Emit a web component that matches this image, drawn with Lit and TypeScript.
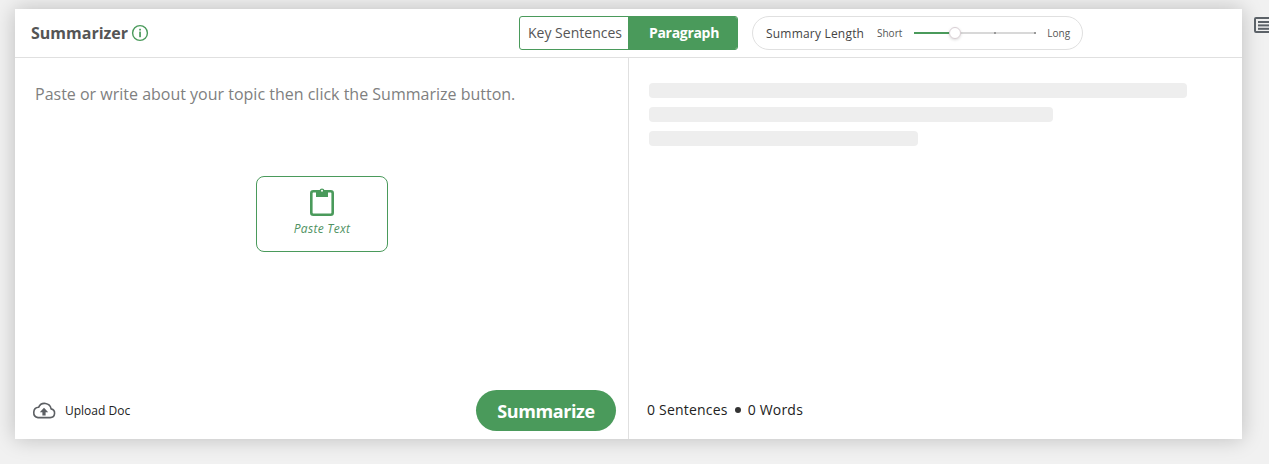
import { LitElement, html, css } from "lit";
import { customElement } from "lit/decorators.js";

@customElement("app-root")
export class AppRoot extends LitElement {
  static styles = css`
    :host {
      display: flex;
      align-items: flex-start;
      width: 1269px;
      height: 464px;
      overflow: hidden;
      background: #f1f1f1;
      font-family: "Open Sans", sans-serif;
      color: #333;
      box-sizing: border-box;
      padding: 9px 0 0 15px;
    }
    .card {
      flex: none;
      width: 1227px;
      height: 430px;
      background: #fff;
      box-shadow: 0 0 20px rgba(0, 0, 0, 0.22);
      display: flex;
      flex-direction: column;
    }
    .side {
      flex: none;
      margin: 8px 0 0 12px;
      width: 30px;
      height: 16px;
      display: block;
    }
    .head {
      flex: none;
      height: 48px;
      border-bottom: 1px solid #e0e0e0;
      display: flex;
      align-items: center;
      position: relative;
    }
    .title {
      display: flex;
      align-items: center;
      gap: 3px;
      margin-left: 16px;
      width: 488px;
      font-weight: 700;
      font-size: 16px;
      color: #555;
    }
    .title svg { display: block; }
    .toggle {
      display: flex;
      width: 219px;
      height: 34px;
      box-sizing: border-box;
      border: 1px solid #4a9a5b;
      border-radius: 3px;
      overflow: hidden;
      font-size: 14px;
      line-height: 30px;
    }
    .toggle span { display: flex; align-items: center; justify-content: center; padding-bottom: 1px; }
    .key { width: 108px; color: #555; padding-left: 2px; box-sizing: border-box; letter-spacing: 0.02px; }
    .para { flex: 1; background: #4a9a5b; color: #fff; font-weight: 700; padding-left: 3px; letter-spacing: -0.3px; }
    .length {
      margin-left: 14px;
      width: 331px;
      height: 34px;
      box-sizing: border-box;
      border: 1px solid #e0e0e0;
      border-radius: 17px;
      display: flex;
      align-items: center;
      padding-left: 13px;
      font-size: 12px;
      color: #444;
    }
    .length .lbl { width: 111px; letter-spacing: 0.2px; }
    .small { font-size: 10px; color: #555; }
    .track {
      position: relative;
      width: 122px;
      height: 2px;
      margin: 0 11px 0 12px;
      background: #d8d8d8;
    }
    .fill { width: 35px; height: 2px; background: #4a9a5b; }
    .knob {
      position: absolute;
      left: 35px;
      top: -5px;
      width: 12px;
      height: 12px;
      box-sizing: border-box;
      border-radius: 50%;
      background: #fff;
      border: 1px solid #d9cfd4;
      box-shadow: 0 1px 3px rgba(0,0,0,0.15);
    }
    .tick {
      position: absolute;
      top: 0;
      width: 2px;
      height: 2px;
      background: #999;
    }
    .body { flex: 1; display: flex; min-height: 0; }
    .left {
      width: 613px;
      border-right: 1px solid #e0e0e0;
      display: flex;
      flex-direction: column;
      position: relative;
    }
    .hint {
      margin: 25px 0 0 20px;
      font-size: 16px;
      line-height: 22px;
      color: #807f7f;
    }
    .paste {
      width: 132px;
      height: 76px;
      box-sizing: border-box;
      margin: 71px 0 0 241px;
      border: 1px solid #4a9a5b;
      border-radius: 8px;
      display: flex;
      flex-direction: column;
      align-items: center;
      padding-top: 11px;
    }
    .paste svg { display: block; }
    .paste i {
      margin-top: 3px;
      font-size: 12px;
      line-height: 16px;
      color: #4f9262;
      letter-spacing: 0.3px;
    }
    .foot {
      margin-top: auto;
      height: 41px;
      margin-bottom: 8px;
      display: flex;
      align-items: center;
      padding: 0 12px 0 17px;
    }
    .upload {
      display: flex;
      align-items: center;
      gap: 9px;
      font-size: 12px;
      font-weight: 500;
      color: #222;
    }
    .upload svg { display: block; }
    .go {
      margin-left: auto;
      width: 140px;
      height: 41px;
      border-radius: 21px;
      background: #4a9a5b;
      color: #fff;
      font-weight: 700;
      font-size: 18px;
      letter-spacing: -0.4px;
      display: flex;
      align-items: center;
      justify-content: center;
    }
    .right {
      flex: 1;
      display: flex;
      flex-direction: column;
      padding: 25px 0 0 20px;
    }
    .skel {
      height: 15px;
      border-radius: 4px;
      background: #eeeeee;
      margin-bottom: 9px;
    }
    .count {
      margin-top: auto;
      margin-bottom: 19px;
      margin-left: -2px;
      display: flex;
      align-items: center;
      gap: 7px;
      font-size: 14px;
      font-weight: 500;
      line-height: 20px;
      letter-spacing: 0.2px;
      color: #222;
    }
    .dot { width: 6px; height: 6px; border-radius: 50%; background: #333; }
  `;

  render() {
    return html`
      <div class="card">
        <div class="head">
          <div class="title">
            <span>Summarizer</span>
            <svg width="18" height="18" viewBox="0 0 18 18" fill="none">
              <circle cx="9" cy="9" r="7.4" stroke="#4a9a5b" stroke-width="1.4"/>
              <rect x="8.2" y="4.8" width="1.7" height="1.7" fill="#4a9a5b"/>
              <rect x="8.2" y="7.6" width="1.7" height="5.6" fill="#4a9a5b"/>
            </svg>
          </div>
          <div class="toggle">
            <span class="key">Key Sentences</span>
            <span class="para">Paragraph</span>
          </div>
          <div class="length">
            <span class="lbl">Summary Length</span>
            <span class="small">Short</span>
            <div class="track">
              <div class="fill"></div>
              <div class="tick" style="left:80px"></div>
              <div class="tick" style="left:120px"></div>
              <div class="knob"></div>
            </div>
            <span class="small">Long</span>
          </div>
        </div>
        <div class="body">
          <div class="left">
            <div class="hint">Paste or write about your topic then click the Summarize button.</div>
            <div class="paste">
              <svg width="26" height="30" viewBox="0 0 26 30" fill="none">
                <rect x="2.3" y="3.3" width="21.4" height="23.4" rx="2" stroke="#4a9a5b" stroke-width="2.6"/>
                <path d="M7 2.4h3.4a2.7 2.7 0 0 1 5.2 0H19V9H7z" fill="#4a9a5b"/>
                <circle cx="13" cy="2.8" r="1" fill="#fff"/>
              </svg>
              <i>Paste Text</i>
            </div>
            <div class="foot">
              <div class="upload">
                <svg width="24" height="17" viewBox="0 0 24 17" fill="none">
                  <path d="M6 15.6h12.2a4.4 4.4 0 0 0 .9-8.7A6.6 6.6 0 0 0 6.6 5.3 5.2 5.2 0 0 0 6 15.6z" stroke="#5c5f63" stroke-width="1.6" stroke-linejoin="round"/>
                  <path d="M12 5.8l4.2 4.4h-2.6v3.2h-3.2v-3.2H7.8z" fill="#5c5f63"/>
                </svg>
                <span>Upload Doc</span>
              </div>
              <div class="go">Summarize</div>
            </div>
          </div>
          <div class="right">
            <div class="skel" style="width:538px"></div>
            <div class="skel" style="width:404px"></div>
            <div class="skel" style="width:269px"></div>
            <div class="count">
              <span>0 Sentences</span><span class="dot"></span><span>0 Words</span>
            </div>
          </div>
        </div>
      </div>
      <svg class="side" viewBox="0 0 30 16" fill="none">
        <rect x="1" y="1" width="28" height="14" rx="1" stroke="#5c6268" stroke-width="2"/>
        <rect x="4" y="4" width="26" height="2" fill="#5c6268"/>
        <rect x="4" y="7.4" width="26" height="2" fill="#5c6268"/>
        <rect x="4" y="10.8" width="26" height="2" fill="#5c6268"/>
      </svg>
    `;
  }
}
